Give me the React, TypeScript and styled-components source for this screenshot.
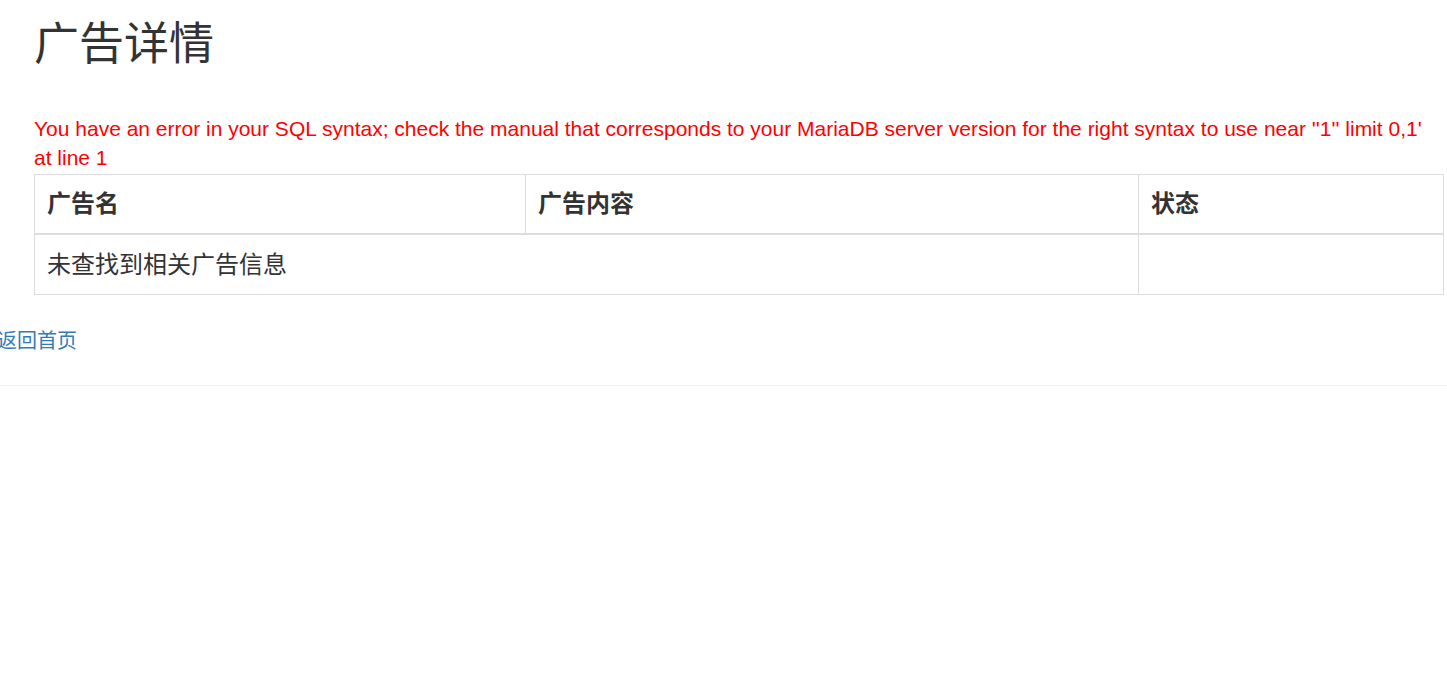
import React from "react";
import styled, { createGlobalStyle } from "styled-components";

const GlobalStyle = createGlobalStyle`
  html, body {
    margin: 0;
    padding: 0;
    background: #fff;
  }
  body {
    font-family: "Liberation Sans", "Noto Sans CJK SC", sans-serif;
    font-size: 20px;
    line-height: 1.42857;
    color: #333;
  }
  * { box-sizing: border-box; }
`;

const Page = styled.div`
  display: flex;
  flex-direction: column;
  width: 100%;
`;

const Container = styled.div`
  display: flex;
  flex-direction: column;
  padding: 0 3px 0 34px;
`;

const Title = styled.h1`
  margin: 20px 0 0;
  font-size: 45px;
  line-height: 49.5px;
  font-weight: 400;
  color: #333;
`;

const ErrorText = styled.div`
  margin-top: 44.7px;
  color: #ff0000;
  font-size: 21px;
  line-height: 29px;
`;

const Table = styled.table`
  width: 100%;
  margin-top: 1.8px;
  border-collapse: collapse;
  table-layout: fixed;
  border: 1px solid #ddd;
  font-size: 24px;
`;

const HeadCell = styled.th`
  padding: 12px;
  line-height: 34px;
  text-align: left;
  font-weight: 700;
  border: 1px solid #ddd;
  border-bottom: 2px solid #ddd;
  vertical-align: bottom;
`;

const Cell = styled.td`
  padding: 12px;
  line-height: 35px;
  border: 1px solid #ddd;
  vertical-align: top;
`;

const BackRow = styled.div`
  margin: 32px 0 0 -3px;
  font-size: 20px;
  line-height: 28.57px;
`;

const BackLink = styled.a`
  color: #337ab7;
  text-decoration: none;
`;

const Divider = styled.hr`
  margin: 29px 0 0;
  border: 0;
  border-top: 1px solid #eee;
  width: 100%;
`;

export default function App() {
  return (
    <>
      <GlobalStyle />
      <Page>
        <Container>
          <Title>广告详情</Title>
          <ErrorText>
            You have an error in your SQL syntax; check the manual that corresponds to your MariaDB server
            version for the right syntax to use near ''1'' limit 0,1' at line 1
          </ErrorText>
          <Table>
            <colgroup>
              <col style={{ width: "491px" }} />
              <col style={{ width: "613px" }} />
              <col />
            </colgroup>
            <thead>
              <tr>
                <HeadCell>广告名</HeadCell>
                <HeadCell>广告内容</HeadCell>
                <HeadCell>状态</HeadCell>
              </tr>
            </thead>
            <tbody>
              <tr>
                <Cell colSpan={2}>未查找到相关广告信息</Cell>
                <Cell></Cell>
              </tr>
            </tbody>
          </Table>
        </Container>
        <BackRow>
          <BackLink href="#">返回首页</BackLink>
        </BackRow>
        <Divider />
      </Page>
    </>
  );
}
